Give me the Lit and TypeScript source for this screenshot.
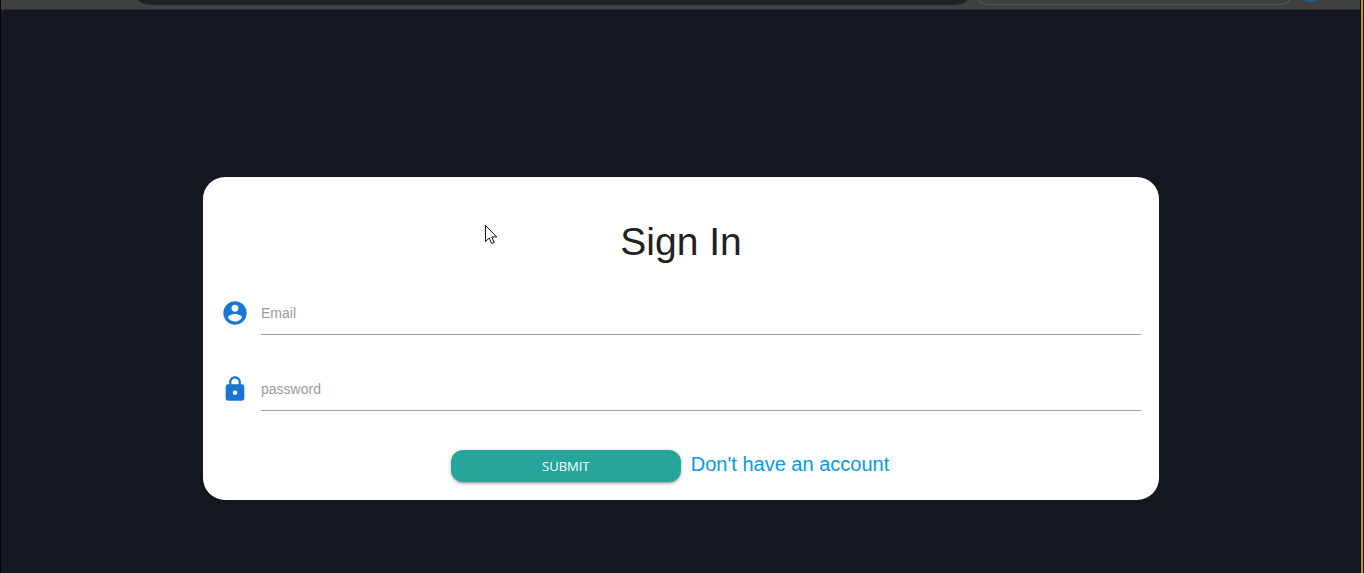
import { LitElement, html, css, svg } from "lit";
import { customElement, property } from "lit/decorators.js";

const ICONS: Record<string, unknown> = {
  account: svg`<path d="M12 2C6.480 2 2 6.480 2 12s4.480 10 10 10 10-4.480 10-10S17.520 2 12 2zm0 3c1.660 0 3 1.340 3 3s-1.340 3-3 3-3-1.340-3-3 1.340-3 3-3zm0 14.200c-2.500 0-4.710-1.280-6-3.220.030-1.990 4-3.080 6-3.080 1.990 0 5.970 1.090 6 3.080-1.290 1.940-3.500 3.220-6 3.220z"/>`,
  lock: svg`<path d="M18 8h-1V6c0-2.760-2.240-5-5-5S7 3.240 7 6v2H6c-1.100 0-2 .9-2 2v10c0 1.100.9 2 2 2h12c1.100 0 2-.9 2-2V10c0-1.100-.9-2-2-2zm-6 9c-1.100 0-2-.9-2-2s.9-2 2-2 2 .9 2 2-.9 2-2 2zm3.100-9H8.900V6c0-1.710 1.390-3.100 3.100-3.100s3.100 1.390 3.100 3.100v2z"/>`,
};

@customElement("sign-in-field")
class SignInField extends LitElement {
  @property() icon = "account";
  @property() type = "text";
  @property() label = "";

  static styles = css`
    :host {
      display: flex;
      gap: 12px;
    }
    .label {
      display: flex;
      align-items: center;
      height: 42px;
    }
    .icon {
      width: 28px;
      height: 28px;
      fill: #1976d2;
    }
    .input {
      flex: 1;
      min-width: 0;
      height: 43px;
      box-sizing: border-box;
      margin: 0;
      padding: 0;
      border: 0;
      border-bottom: 1px solid #9e9e9e;
      outline: none;
      background: transparent;
      color: #212121;
      font: 14px "Liberation Sans", Arial, sans-serif;
    }
    .input::placeholder {
      color: #9a9a9a;
    }
    .input:focus {
      border-color: #26a69a;
    }
  `;

  render() {
    return html`
      <label class="label" for="input" aria-label=${this.label}>
        <svg class="icon" viewBox="0 0 24 24" aria-hidden="true">${ICONS[this.icon]}</svg>
      </label>
      <input class="input" id="input" type=${this.type} placeholder=${this.label} />
    `;
  }
}

@customElement("app-root")
class AppRoot extends LitElement {
  static styles = css`
    :host {
      display: flex;
      flex-direction: column;
      position: relative;
      box-sizing: border-box;
      min-height: 100vh;
      overflow: hidden;
      border-left: 1px solid #05070b;
      background: #131720;
      font-family: "Liberation Sans", Arial, sans-serif;
    }
    .edge {
      position: absolute;
      top: 0;
      right: 0;
      bottom: 0;
      width: 2px;
      border-left: 1px solid #08090c;
      border-right: 1px solid #17140a;
      background: #c4a400;
    }
    .toolbar {
      display: flex;
      box-sizing: border-box;
      height: 10px;
      padding: 0 48px 0 138px;
      background: #404040;
      border-bottom: 1px solid #292b2e;
    }
    .address {
      flex: 1;
      height: 5px;
      border-radius: 0 0 14px 14px / 0 0 5px 5px;
      background: #202124;
    }
    .search {
      box-sizing: border-box;
      width: 312px;
      height: 5px;
      margin: 0 14px 0 11px;
      border: 1px solid #5a5a5a;
      border-top: 0;
      border-radius: 0 0 12px 12px / 0 0 5px 5px;
    }
    .avatar {
      width: 12px;
      height: 2px;
      border-radius: 0 0 6px 6px / 0 0 2px 2px;
      background: #245d86;
    }
    .main {
      flex: 1;
      display: flex;
      justify-content: center;
      align-items: flex-start;
      padding: 167px 3px 73px 0;
    }
    .card {
      box-sizing: border-box;
      width: calc(70% + 4px);
      padding: 42px 18px 18px;
      border-radius: 22px;
      background: #fff;
    }
    .title {
      margin: 0 0 27px;
      color: #212121;
      font-size: 39px;
      line-height: 46px;
      font-weight: 400;
      text-align: center;
    }
    .fields {
      display: grid;
      gap: 33px;
    }
    .actions {
      display: flex;
      justify-content: center;
      gap: 10px;
      padding: 39px 22px 0 0;
    }
    .submit {
      width: 230px;
      height: 32px;
      padding: 0;
      border: 0;
      border-radius: 12px;
      background: #26a69a;
      box-shadow: 0 2px 2px rgba(0, 0, 0, 0.14), 0 3px 1px -2px rgba(0, 0, 0, 0.12),
        0 1px 5px rgba(0, 0, 0, 0.2);
      color: #fff;
      font: 13px "Open Sans", sans-serif;
      text-transform: uppercase;
      cursor: pointer;
    }
    .link {
      color: #039be5;
      font-size: 20px;
      line-height: 28px;
      text-decoration: none;
    }
    .cursor {
      position: absolute;
      left: 484px;
      top: 224px;
      width: 13px;
      height: 21px;
      pointer-events: none;
    }
  `;

  render() {
    return html`
      <div class="toolbar">
        <div class="address"></div>
        <div class="search"></div>
        <div class="avatar"></div>
      </div>
      <main class="main">
        <form class="card" @submit=${(e: Event) => e.preventDefault()}>
          <h1 class="title">Sign In</h1>
          <div class="fields">
            <sign-in-field icon="account" type="email" label="Email"></sign-in-field>
            <sign-in-field icon="lock" type="password" label="password"></sign-in-field>
          </div>
          <div class="actions">
            <button class="submit" type="submit">Submit</button>
            <a class="link" href="#signup">Don't have an account</a>
          </div>
        </form>
      </main>
      <svg class="cursor" viewBox="0 0 13 21" aria-hidden="true">
        <path d="M.5 1.500v16l3.700-3.500 2.500 5.500 2.500-1-2.400-5.500h5z" fill="#fff" stroke="#111" />
      </svg>
      <div class="edge"></div>
    `;
  }
}
